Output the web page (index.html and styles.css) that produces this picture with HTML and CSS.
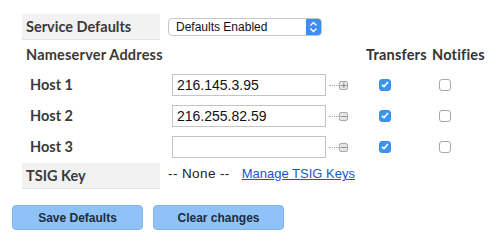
FILE: index.html
```html
<!DOCTYPE html>
<html lang="en">
<head>
    <meta charset="UTF-8">
    <title>Service Defaults</title>
    <link rel="stylesheet" href="styles.css">
</head>
<body>
    <div class="panel">
        <div class="grid">
            <div class="label shaded">Service Defaults</div>
            <div class="span3">
                <div class="select">
                    <span class="select-text">Defaults Enabled</span>
                    <span class="select-arrow">
                        <svg width="9" height="12" viewBox="0 0 9 12"><path d="M1.5 4.5 L4.5 1.5 L7.5 4.5 M1.5 7.5 L4.5 10.5 L7.5 7.5" fill="none" stroke="#fff" stroke-width="1.4"/></svg>
                    </span>
                </div>
            </div>

            <div class="label head">Nameserver Address</div>
            <div></div>
            <div class="head col-head">Transfers</div>
            <div class="head col-head">Notifies</div>

            <div class="host">Host 1</div>
            <div class="field">
                <input class="addr" type="text" value="216.145.3.95">
                <span class="dots"></span><span class="btn-mini">+</span>
            </div>
            <div class="cb-cell t"><span class="cb on"><svg width="8" height="7" viewBox="0 0 8 7"><path d="M1 3.8 L3 5.6 L7 1" fill="none" stroke="#fff" stroke-width="1.6"/></svg></span></div>
            <div class="cb-cell n"><span class="cb"></span></div>

            <div class="host">Host 2</div>
            <div class="field">
                <input class="addr" type="text" value="216.255.82.59">
                <span class="dots"></span><span class="btn-mini">&minus;</span>
            </div>
            <div class="cb-cell t"><span class="cb on"><svg width="8" height="7" viewBox="0 0 8 7"><path d="M1 3.8 L3 5.6 L7 1" fill="none" stroke="#fff" stroke-width="1.6"/></svg></span></div>
            <div class="cb-cell n"><span class="cb"></span></div>

            <div class="host">Host 3</div>
            <div class="field">
                <input class="addr" type="text" value="">
                <span class="dots"></span><span class="btn-mini">&minus;</span>
            </div>
            <div class="cb-cell t"><span class="cb on"><svg width="8" height="7" viewBox="0 0 8 7"><path d="M1 3.8 L3 5.6 L7 1" fill="none" stroke="#fff" stroke-width="1.6"/></svg></span></div>
            <div class="cb-cell n"><span class="cb"></span></div>

            <div class="label shaded tsig">TSIG Key</div>
            <div class="span3 tsig-val"><span class="none">-- None --</span><a href="#">Manage TSIG Keys</a></div>
        </div>

        <div class="actions">
            <button type="button">Save Defaults</button>
            <button type="button">Clear changes</button>
        </div>
    </div>
</body>
</html>
```

FILE: styles.css
```css
* {
    margin: 0;
    padding: 0;
    box-sizing: border-box;
}

body {
    font-family: 'Lato', sans-serif;
    background-color: #fff;
    color: #3a3a3a;
}

.panel {
    padding: 14px 0 0 12px;
}

.grid {
    display: grid;
    grid-template-columns: 10px 146px 198px 66px 50px;
    grid-template-rows: 26px 29px 31px 31px 31px 27px;
    align-items: center;
}

.grid > .label,
.grid > .host {
    grid-column: 2;
}

.span3 {
    grid-column: 3 / span 3;
}

.label {
    font-weight: 700;
    font-size: 14.5px;
    padding-left: 4px;
    width: 138px;
    white-space: nowrap;
}

.shaded {
    background-color: #f2f2f2;
    border-bottom: 1px solid #e2e2e2;
    height: 26px;
    line-height: 25px;
}

.head {
    font-weight: 700;
    font-size: 14.5px;
    white-space: nowrap;
    letter-spacing: 0.2px;
}

.col-head {
    color: #333;
}

.host {
    font-weight: 700;
    font-size: 14.5px;
    padding-left: 8px;
}

.select {
    display: flex;
    width: 154px;
    height: 18px;
    border: 1px solid #c6c6c6;
    border-radius: 4px;
    overflow: hidden;
    font-family: 'Liberation Sans', sans-serif;
    font-size: 12px;
    color: #111;
}

.select-text {
    flex: 1;
    padding-left: 7px;
    line-height: 16px;
}

.select-arrow {
    width: 15px;
    background-color: #3b8ef5;
    display: flex;
    align-items: center;
    justify-content: center;
}

.field {
    display: flex;
    align-items: center;
    padding-left: 4px;
}

.addr {
    width: 154px;
    height: 22px;
    border: 1px solid #c4c4c4;
    padding: 0 4px;
    font-family: 'Liberation Sans', sans-serif;
    font-size: 14px;
    color: #111;
    outline: none;
}

.dots {
    width: 10px;
    margin-left: 3px;
    border-top: 1px dotted #a8a8a8;
    margin-top: 2px;
}

.btn-mini {
    width: 9px;
    height: 9px;
    border: 1px solid #a9a9a9;
    border-radius: 2px;
    background-color: #e6e6e6;
    color: #777;
    font-family: 'DejaVu Sans', sans-serif;
    font-size: 9px;
    line-height: 7px;
    text-align: center;
    margin-top: 1px;
}

.cb-cell {
    display: flex;
    align-items: center;
}

.cb-cell.t {
    padding-left: 13px;
}

.cb-cell.n {
    padding-left: 7px;
}

.cb {
    width: 12px;
    height: 12px;
    border: 1px solid #a8a8a8;
    border-radius: 3px;
    background-color: #fff;
    display: flex;
    align-items: center;
    justify-content: center;
}

.cb.on {
    background-color: #3a94f8;
    border-color: #3a8ef0;
}

.tsig {
    margin-top: 1px;
}

.tsig-val {
    font-family: 'Liberation Sans', sans-serif;
    font-size: 13.5px;
    color: #222;
    margin-top: -4px;
}

.tsig-val .none {
    margin-right: 12px;
    letter-spacing: 0.4px;
}

.tsig-val a {
    color: #1a56c8;
    font-size: 13px;
}

.actions {
    display: flex;
    gap: 10px;
    margin-top: 16px;
}

.actions button {
    width: 131px;
    height: 25px;
    background-color: #8fc3f7;
    border: 1px solid #82b4e6;
    border-radius: 4px;
    font-family: 'Liberation Sans', sans-serif;
    font-weight: 700;
    font-size: 12px;
    color: #1d2b3c;
}
```
